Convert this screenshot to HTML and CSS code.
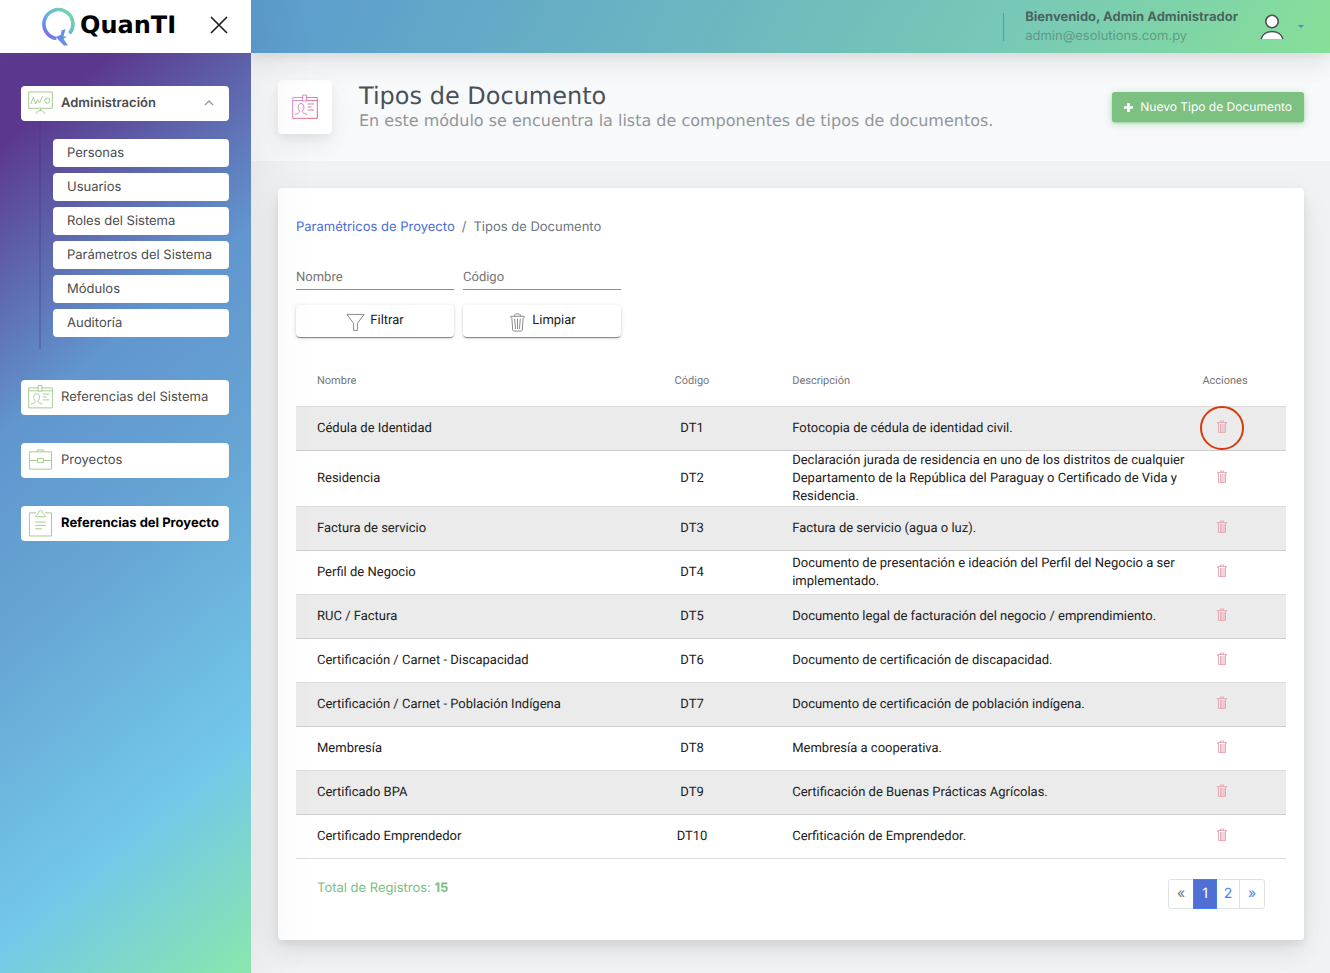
FILE: index.html
```html
<!DOCTYPE html>
<html lang="es">
<head>
<meta charset="utf-8">
<meta name="viewport" content="width=device-width, initial-scale=1">
<title>QuanTI - Tipos de Documento</title>
<link rel="stylesheet" href="styles.css">
</head>
<body>
<svg class="sprite" aria-hidden="true">
  <symbol id="badge" viewBox="0 0 26 26">
    <path d="M.7 3.5H10.500M14.500 3.500H25.300V24.300H.7V3.500M.7 6.500H10.500M14.500 6.500H25.300M10.500 1H14.500V7H10.500Z M3 20.500C7 19 8 18.500 7.500 17C5 14 6 9.500 9 9.500S13 14 10.500 17C10 18.500 11 19 15 20.500M15.500 10H22M15.500 13H19.500M15.500 16H22"/>
  </symbol>
  <symbol id="board" viewBox="0 0 26 26">
    <path d="M.7 1.500H25.300V18.500H.7ZM13 18.500V21M8 24.500L11 21H15L18 24.500M3 14L5.500 7L8 14L10 9.500L12 13L15 6"/><circle cx="20" cy="10.500" r="2.700"/>
  </symbol>
  <symbol id="case" viewBox="0 0 26 26">
    <path d="M1.500 4.500H24.500V22.500H1.500ZM10 4.500V2.500H16V4.500M1.500 13.500H10M16 13.500H24.500M10 11.500H16V15.500H10Z"/>
  </symbol>
  <symbol id="clipboard" viewBox="0 0 26 28">
    <path d="M8.500 3.500H1.500V27.500H24.500V3.500H17.500M8 7.500C8 5 10.500 5 11 3C11 .5 15 .5 15 3C15.500 5 18 5 18 7.500ZM7.500 13H18.500M7.500 16.500H18.500M7.500 20H14.500"/>
  </symbol>
  <symbol id="trash" viewBox="0 0 16 20">
    <path d="M1 5V3.500H15V5M5 3.500V2L6 1H10L11 2V3.500M2 5L3 18L4 19H12L13 18L14 5M5 6L6 17M8 6V17M11 6L10 17"/>
  </symbol>
  <symbol id="trash-small" viewBox="0 0 10 13">
    <path d="M.5 3.500V2.500H9.500V3.500M3.500 2.500V1H6.500V2.500M1.500 3V12.500H8.500V3M3.500 4V12M5 4V12M7 4V12"/>
  </symbol>
</svg>
<div class="app">
  <aside class="sidebar">
    <div class="brand">
      <svg class="brand-mark" viewBox="0 0 36 42" aria-hidden="true">
        <defs><linearGradient id="ring" x1="0" y1="1" x2="1" y2="0"><stop offset="0" stop-color="#7b5be0"/><stop offset=".45" stop-color="#62b4e4"/><stop offset="1" stop-color="#78dc9c"/></linearGradient></defs>
        <path d="M15.500 32.500A14.500 14.500 0 1 1 28.500 27.500" fill="none" stroke="url(#ring)" stroke-width="3.600"/>
        <path d="M15 31L20 28.500L20.500 24.500L24.500 23L22.500 30.500H26L22.500 33L27 39.500H23L17.500 34Z" fill="#6490e2" stroke="none"/>
      </svg>
      <span class="brand-name">QuanTI</span>
      <button class="close" type="button" aria-label="Cerrar menú"><svg viewBox="0 0 18 18"><path d="M1 1L17 17M17 1L1 17"/></svg></button>
    </div>
    <nav class="menu">
      <div class="group">
        <a class="item item-open" href="#"><svg class="icon"><use href="#board"/></svg><span>Administración</span><svg class="chevron" viewBox="0 0 10 6"><path d="M1 5L5 1L9 5"/></svg></a>
        <ul class="submenu">
          <li><a href="#">Personas</a></li>
          <li><a href="#">Usuarios</a></li>
          <li><a href="#">Roles del Sistema</a></li>
          <li><a href="#">Parámetros del Sistema</a></li>
          <li><a href="#">Módulos</a></li>
          <li><a href="#">Auditoría</a></li>
        </ul>
      </div>
      <a class="item" href="#"><svg class="icon"><use href="#badge"/></svg><span>Referencias del Sistema</span></a>
      <a class="item" href="#"><svg class="icon"><use href="#case"/></svg><span>Proyectos</span></a>
      <a class="item item-active" href="#"><svg class="icon"><use href="#clipboard"/></svg><span>Referencias del Proyecto</span></a>
    </nav>
  </aside>
  <div class="page">
    <header class="topbar">
      <div class="user">
        <strong>Bienvenido, Admin Administrador</strong>
        <span>admin@esolutions.com.py</span>
      </div>
      <button class="account" type="button" aria-label="Cuenta">
        <svg class="avatar" viewBox="0 0 24 26"><circle cx="12" cy="7.500" r="6.200"/><path d="M1 25C4 15 20 15 23 25"/></svg>
        <svg class="caret" viewBox="0 0 6 3"><path d="M0 0H6L3 3Z"/></svg>
      </button>
    </header>
    <section class="title-bar">
      <div class="title-icon">
        <svg><defs><linearGradient id="pink" x1="0" y1="0" x2="26" y2="26" gradientUnits="userSpaceOnUse"><stop offset="0" stop-color="#dc9be6"/><stop offset="1" stop-color="#df606f"/></linearGradient></defs><use href="#badge"/></svg>
      </div>
      <div class="title-text">
        <h1>Tipos de Documento</h1>
        <p>En este módulo se encuentra la lista de componentes de tipos de documentos.</p>
      </div>
      <button class="add" type="button"><svg viewBox="0 0 10 10"><path d="M5 0V10M0 5H10"/></svg>Nuevo Tipo de Documento</button>
    </section>
    <main class="card">
      <nav class="crumbs" aria-label="Ruta"><a href="#">Paramétricos de Proyecto</a><span>/</span><span>Tipos de Documento</span></nav>
      <form class="filters">
        <input type="text" placeholder="Nombre" aria-label="Nombre">
        <input type="text" placeholder="Código" aria-label="Código">
        <button type="button"><svg viewBox="0 0 20 20"><path d="M1 1.500H19L12 11V18.500H8V11Z"/></svg>Filtrar</button>
        <button type="button"><svg viewBox="0 0 16 20"><use href="#trash"/></svg>Limpiar</button>
      </form>
      <table>
        <colgroup><col class="c-name"><col class="c-code"><col class="c-desc"><col class="c-act"></colgroup>
        <thead><tr><th>Nombre</th><th>Código</th><th>Descripción</th><th>Acciones</th></tr></thead>
        <tbody>
          <tr><td>Cédula de Identidad</td><td>DT1</td><td>Fotocopia de cédula de identidad civil.</td><td><button class="delete marked" type="button" aria-label="Eliminar"><svg><use href="#trash-small"/></svg></button></td></tr>
          <tr><td>Residencia</td><td>DT2</td><td>Declaración jurada de residencia en uno de los distritos de cualquier Departamento de la República del Paraguay o Certificado de Vida y Residencia.</td><td><button class="delete" type="button" aria-label="Eliminar"><svg><use href="#trash-small"/></svg></button></td></tr>
          <tr><td>Factura de servicio</td><td>DT3</td><td>Factura de servicio (agua o luz).</td><td><button class="delete" type="button" aria-label="Eliminar"><svg><use href="#trash-small"/></svg></button></td></tr>
          <tr><td>Perfil de Negocio</td><td>DT4</td><td>Documento de presentación e ideación del Perfil del Negocio a ser implementado.</td><td><button class="delete" type="button" aria-label="Eliminar"><svg><use href="#trash-small"/></svg></button></td></tr>
          <tr><td>RUC / Factura</td><td>DT5</td><td>Documento legal de facturación del negocio / emprendimiento.</td><td><button class="delete" type="button" aria-label="Eliminar"><svg><use href="#trash-small"/></svg></button></td></tr>
          <tr><td>Certificación / Carnet - Discapacidad</td><td>DT6</td><td>Documento de certificación de discapacidad.</td><td><button class="delete" type="button" aria-label="Eliminar"><svg><use href="#trash-small"/></svg></button></td></tr>
          <tr><td>Certificación / Carnet - Población Indígena</td><td>DT7</td><td>Documento de certificación de población indígena.</td><td><button class="delete" type="button" aria-label="Eliminar"><svg><use href="#trash-small"/></svg></button></td></tr>
          <tr><td>Membresía</td><td>DT8</td><td>Membresía a cooperativa.</td><td><button class="delete" type="button" aria-label="Eliminar"><svg><use href="#trash-small"/></svg></button></td></tr>
          <tr><td>Certificado BPA</td><td>DT9</td><td>Certificación de Buenas Prácticas Agrícolas.</td><td><button class="delete" type="button" aria-label="Eliminar"><svg><use href="#trash-small"/></svg></button></td></tr>
          <tr><td>Certificado Emprendedor</td><td>DT10</td><td>Cerfiticación de Emprendedor.</td><td><button class="delete" type="button" aria-label="Eliminar"><svg><use href="#trash-small"/></svg></button></td></tr>
        </tbody>
      </table>
      <div class="table-foot">
        <p>Total de Registros: <strong>15</strong></p>
        <nav class="pager" aria-label="Paginación"><a class="disabled" href="#">«</a><a class="current" href="#">1</a><a href="#">2</a><a href="#">»</a></nav>
      </div>
    </main>
  </div>
</div>
</body>
</html>
```
FILE: styles.css
```css
* { box-sizing: border-box; }
body { margin: 0; font: 13px/18px Inter, "Liberation Sans", sans-serif; color: #495057; background: #f1f2f4; text-rendering: geometricPrecision; }
a { color: inherit; text-decoration: none; }
button { font: inherit; border: 0; padding: 0; cursor: pointer; text-rendering: inherit; }
input { text-rendering: inherit; }
svg { fill: none; stroke: currentColor; display: block; flex: none; }
.sprite { position: absolute; width: 0; height: 0; }
.app { display: flex; min-height: 100vh; }

.sidebar { width: 251px; flex: none; display: flex; flex-direction: column; position: relative; z-index: 2; box-shadow: 7px 0 60px rgba(0, 0, 0, .07); }
.brand { height: 53px; background: #fff; display: flex; align-items: center; padding: 0 23px 4px 41px; }
.brand-mark { width: 36px; height: 42px; margin-top: 4px; stroke: none; }
.brand-name { font: 700 24px/32px "DejaVu Sans", sans-serif; color: #000; margin-left: 3px; flex: 1; }
.close { background: none; color: #222; }
.close svg { width: 18px; height: 18px; stroke-width: 1.7; }
.menu { flex: 1; background: linear-gradient(140deg, #5c388f 0%, #5b378e 8%, #5e64ab 20%, #6196cf 34%, #66a4d4 52%, #73c8e9 79%, #8ae6ac 100%); padding: 33px 22px 0 21px; display: flex; flex-direction: column; gap: 28px; }
.item { height: 35px; background: #fff; border-radius: 4px; display: flex; align-items: center; padding: 0 15px 2px 7px; gap: 8px; color: #4c4c4c; }
.item span { flex: 1; white-space: nowrap; }
.item-active { padding-right: 8px; }
.icon { width: 25px; height: 28px; color: #a4c88f; }
.item-open { font-weight: 600; }
.item-active { font-weight: 700; color: #000; }
.chevron { width: 10px; height: 6px; color: #999; stroke-width: 1.4; }
.submenu { list-style: none; margin: 0 0 3px 18px; padding: 18px 0 12px 12px; border-left: 2px solid rgba(60, 60, 130, .3); display: flex; flex-direction: column; gap: 6px; }
.submenu a { display: block; background: #fff; border-radius: 4px; line-height: 28px; padding: 0 14px; color: #4c4c4c; }

.page { flex: 1; min-width: 0; }
.topbar { height: 53px; background: linear-gradient(120deg, #5b9bcf, #77c9b6 70%, #86e098); display: flex; justify-content: flex-end; align-items: center; gap: 22px; padding-right: 26px; position: relative; z-index: 1; box-shadow: 0 7px 35px rgba(4, 9, 20, .05), 0 15px 22px rgba(4, 9, 20, .04), 0 4px 8px rgba(4, 9, 20, .05); }
.user { border-left: 1px solid rgba(60, 90, 90, .4); padding-left: 21px; height: 28px; display: flex; flex-direction: column; justify-content: center; }
.user strong { color: rgba(60, 70, 75, .8); line-height: 19px; }
.user span { color: rgba(60, 80, 80, .45); line-height: 19px; }
.account { background: none; display: flex; align-items: center; gap: 14px; }
.avatar { width: 24px; height: 26px; fill: #fff; stroke: #50515a; stroke-width: 1.6; }
.caret { width: 6px; height: 3px; fill: #557fe0; stroke: none; }

.title-bar { background: #f8f9fb; padding: 27px 26px 27px 27px; display: flex; align-items: center; }
.title-icon { width: 54px; height: 54px; border-radius: 4px; background: #fff; display: grid; place-items: center; box-shadow: 0 7px 35px rgba(4, 9, 20, .03), 0 15px 22px rgba(4, 9, 20, .03), 0 4px 8px rgba(4, 9, 20, .06); }
.title-icon svg { width: 26px; height: 26px; stroke: url(#pink); }
.title-text { flex: 1; margin-left: 27px; font-family: "DejaVu Sans", sans-serif; }
.title-text h1 { margin: 0; font-size: 24px; line-height: 28px; font-weight: 400; color: #495057; }
.title-text p { margin: 0; font-size: 16px; line-height: 22px; color: #939699; }
.add { height: 30px; border-radius: 3px; background: #7cc082; color: #fff; display: flex; align-items: center; gap: 7px; padding: 0 12px; font-size: 12px; white-space: nowrap; box-shadow: 0 2px 8px rgba(100, 190, 110, .4), 0 1px 2px rgba(80, 160, 90, .4); }
.add svg { width: 9px; height: 9px; stroke-width: 3; }

.card { margin: 27px 26px 33px 27px; padding: 29px 18px 31px; background: #fff; border-radius: 4px; box-shadow: 0 7px 35px rgba(4, 9, 20, .05), 0 15px 22px rgba(4, 9, 20, .04), 0 4px 8px rgba(4, 9, 20, .07); }
.crumbs { display: flex; gap: 7px; line-height: 20px; color: #6c757d; }
.crumbs a { color: #4a6bd8; }
.filters { margin-top: 27px; display: grid; grid-template-columns: 158px 158px; column-gap: 9px; row-gap: 15px; font-family: Roboto, sans-serif; }
.filters input { width: 100%; height: 26px; border: 0; border-bottom: 1px solid #8c8c8c; padding: 1px 0 0; font: 13px Roboto, sans-serif; background: none; }
.filters input::placeholder { color: #757575; }
.filters button { height: 32px; background: #fff; color: #212121; border-radius: 4px; display: flex; align-items: center; justify-content: center; gap: 5px; box-shadow: 0 2px 1px -1px rgba(0, 0, 0, .3), 0 1px 1px rgba(0, 0, 0, .2), 0 1px 4px rgba(0, 0, 0, .15); }
.filters svg { height: 19px; width: 19px; color: #85858a; margin-top: 2px; }

table { width: 100%; margin-top: 17px; border-collapse: collapse; table-layout: fixed; font: 13px/18px Roboto, sans-serif; color: #212121; }
.c-name { width: 32%; }
.c-code { width: 16%; }
.c-act { width: 100px; }
th { height: 52px; font-size: 11px; font-weight: 400; color: #757575; text-align: left; padding: 2px 0 0 21px; }
td { height: 44px; padding: 1px 0 0 21px; border-bottom: 1px solid #dcdcdc; }
th:nth-child(2), td:nth-child(2) { text-align: center; padding-left: 0; }
th:last-child { text-align: center; padding-left: 0; padding-right: 22px; }
td:last-child { padding: 0 29px 3px 0; }
tbody tr:first-child td { border-top: 1px solid #dcdcdc; }
tbody tr:nth-child(odd) { background: #ebebeb; }
tbody tr:nth-child(odd) td { border-bottom-color: #ccc; }
.delete { display: block; margin: 0 auto; background: none; position: relative; color: #e6abb5; }
.delete svg { width: 10px; height: 13px; }
.marked::after { content: ""; box-sizing: border-box; position: absolute; top: -14px; left: -17px; width: 44px; height: 44px; border: 2px solid #d63a0c; border-radius: 50%; }

.table-foot { display: flex; justify-content: space-between; align-items: flex-start; padding: 20px 21px 0; }
.table-foot p { margin: 0; color: #7cc082; }
.pager { display: flex; font-size: 14px; line-height: 28px; color: #4a7df0; }
.pager a { border: 1px solid #dee2e6; padding: 0 6px; margin-left: -1px; min-width: 24px; text-align: center; }
.pager a:first-child { border-radius: 3px 0 0 3px; min-width: 26px; }
.pager a:last-child { border-radius: 0 3px 3px 0; min-width: 26px; }
.pager .disabled { color: #6c757d; }
.pager .current { background: #506fd3; border-color: #4080ff; color: #fff; position: relative; }
```
